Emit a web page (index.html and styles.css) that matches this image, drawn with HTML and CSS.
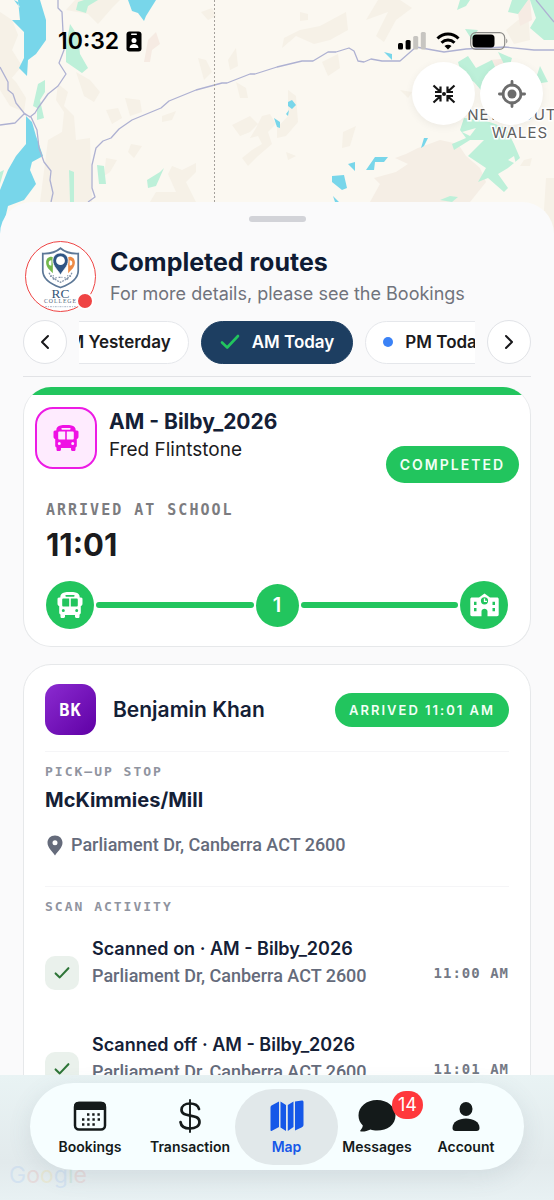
FILE: index.html
```html
<!DOCTYPE html>
<html lang="en">
<head>
<meta charset="utf-8">
<meta name="viewport" content="width=device-width, initial-scale=1">
<title>Completed routes</title>
<link rel="stylesheet" href="styles.css">
</head>
<body>
<svg width="0" height="0" class="sprite" aria-hidden="true">
  <symbol id="bus" viewBox="0 0 26 26">
    <path fill="currentColor" fill-rule="evenodd" d="M7.500 .5C10 -.1 16 -.1 18.500 .5C21 1 22.700 2.500 22.700 5V5.500H24C25 5.500 25.500 6.300 25.500 7.200V11.500C25.500 12.800 24.800 13.800 23.800 14V20.500C23.800 21.600 23.300 22.300 22.500 22.600V24.500C22.500 25.500 21.900 26 21 26H19.500C18.600 26 18 25.400 18 24.500V23H8V24.500C8 25.400 7.400 26 6.500 26H5C4.100 26 3.500 25.500 3.500 24.500V22.600C2.700 22.300 2.200 21.600 2.200 20.500V14C1.200 13.800 .5 12.800 .5 11.500V7.200C.5 6.300 1 5.500 2 5.500H3.300V5C3.300 2.500 5 1 7.500 .5ZM9 2.900C8.200 2.900 8.200 4.700 9 4.700H17C17.800 4.700 17.800 2.900 17 2.900ZM6.500 6.500C5.700 6.500 5.200 7 5.200 7.800V13.200C5.200 14 5.700 14.600 6.500 14.600H12.200V6.500ZM13.800 6.500V14.600H19.500C20.300 14.600 20.800 14 20.800 13.200V7.800C20.800 7 20.300 6.500 19.500 6.500ZM6.300 17.100A1.500 1.500 0 1 0 6.300 20.100A1.500 1.500 0 1 0 6.300 17.100ZM19.700 17.100A1.500 1.500 0 1 0 19.700 20.100A1.500 1.500 0 1 0 19.700 17.100Z"/>
  </symbol>
  <symbol id="check" viewBox="0 0 20 16">
    <path d="M2 8.500L7.200 13.500L18 2" fill="none" stroke="currentColor" stroke-width="2.600" stroke-linecap="round" stroke-linejoin="round"/>
  </symbol>
</svg>

<div class="app">
  <svg class="map" viewBox="0 0 554 240" preserveAspectRatio="xMidYMin slice" aria-hidden="true">
    <rect width="554" height="240" fill="#fbf8f1"/>
    <g fill="#f6f1e7">
      <path d="M0 12L12 20L18 35L12 50L22 66L10 80L0 78ZM0 66L16 82L26 98L24 112L10 106L0 90Z"/>
      <path d="M66 10L88 14L98 24L112 8L120 0H75ZM76 72L90 80L100 92L94 102L84 96ZM58 84L68 92L64 106L74 116L76 140L90 138L92 202H40L48 140L62 132L64 112L56 100Z"/>
      <path d="M125 98L140 100L142 112L130 116ZM106 110L118 108L122 118L112 124ZM131 144L142 146L134 158L128 152ZM162 116L176 111L172 120L162 122Z"/>
      <path d="M106 158L117 160L110 172L104 176ZM172 166L182 170L196 163L196 172L186 182L196 202H150L156 192H176L168 174Z"/>
      <path d="M201 12L212 8L216 16L208 20ZM198 58L206 60L212 72L204 80ZM228 60L236 48L238 66L230 70ZM236 82L246 88L248 98L240 98Z"/>
      <path d="M232 125L250 116L258 124L250 132L240 136ZM262 116L270 114L276 124L268 132L272 144L258 156L248 166L242 158L252 150L262 144L258 136L250 138L256 128Z"/>
      <path d="M300 12L308 14L308 20L300 21ZM320 26L346 12L348 30L330 40L314 44L296 36L282 48L284 38L300 30ZM378 0L400 0L412 8L396 20L384 42L376 36L388 12L366 20Z"/>
      <path d="M322 62L338 54L340 68L328 76ZM288 90L296 96L298 122L286 136L277 138V128L288 116ZM343 132L356 126L350 146L342 148ZM286 152L296 156L288 160ZM400 90L412 92L408 98Z"/>
      <path d="M506 30L528 12L530 40L514 44ZM524 160L532 158L530 166L520 166ZM546 178H554V240H542Z"/>
    </g>
    <path fill="#f5eee5" d="M395 158L406 154L418 148L440 140L458 144L466 156L480 168L486 182L470 202H370L380 184L374 178L396 172L408 164Z"/>
    <g fill="#f6ebe3"><path d="M148 40L156 32L160 44L152 50L150 62L144 62ZM516 0H530L532 20L520 26ZM490 60L510 58L500 72Z"/></g>
    <g fill="#bdf0d9">
      <path d="M78 2L84 0H98L88 6L86 13L76 10ZM70 24L78 36L80 54L88 68L82 73L66 62L66 46ZM38 84L45 80L45 92L40 100L44 118L37 120L37 108L33 106ZM69 170L74 172V202H70ZM97 165L104 166L106 184L99 184ZM147 180L160 172L164 168L156 186L148 188ZM0 172L4 170L0 184Z"/>
      <path d="M460 0H470L466 6L457 10ZM512 0H528L518 14L508 12ZM530 0H554V40L544 40L530 28L536 18ZM465 29L478 30L472 40ZM458 62L468 56L476 68L492 60L500 78L486 96L474 82L462 76ZM498 52L512 58L508 72ZM540 66L548 82L534 84Z"/>
      <path d="M464 118L484 120L506 128L514 144L520 158L508 168L498 174L508 188L504 192L488 178L478 182L486 168L468 156L484 140L470 140L454 150L452 144L466 138L460 130ZM440 200L450 196L458 197L452 202Z"/>
    </g>
    <g fill="#fbf8f1"><path d="M462 132L476 128L470 136ZM508 160L514 156L516 164ZM492 134L498 128L502 134Z"/></g>
    <g fill="#78d6ea">
      <path d="M18 0H40L46 20V40L36 54L28 60L27 76L19 68L24 58V32L12 20L20 20ZM14 0L20 8L18 2ZM128 0H156L146 16L144 21L138 13L132 11Z"/>
      <path d="M26 116L32 122L36 136L43 156L32 162L30 170L36 184L24 200L8 206L0 240V190L8 170L16 156L26 144Z"/>
      <path d="M274 118L280 122V128L277 127ZM288 102L292 100L296 105L292 109L288 106ZM286 114L289 110L288 116ZM384 52L392 54L392 60ZM421 148L424 138L428 138L424 146ZM348 164L355 162L355 171ZM366 170L375 157H388L384 162L375 162L374 170ZM332 176L344 175L347 188L342 190L332 182ZM333 196L339 202H335Z"/>
    </g>
    <g fill="none" stroke="#aeb1d2" stroke-width="1.300" stroke-linejoin="round">
      <path d="M58 0V8L62 12L63 32L64 50L59 63L66 74L58 86L48 94L38 108L35 113L30 117L24 113L16 103L13 94L8 90V82L0 67M0 125L15 123L24 114L31 117L37 130L39 148L44 162L51 171L50 180L53 193L51 202"/>
      <path d="M88 202L95 197L92 188V165L96 148L103 141L111 138L119 129L132 120L161 108L169 101L196 90L222 83L227 83L250 74L255 74L277 67L302 61H313L328 52H336L349 48L354 51L358 61L364 62L371 59L382 61H400L416 47L444 52L466 49L505 47L534 50H554M536 0L554 22"/>
    </g>
    <path d="M214.500 0V202" stroke="#a5a19c" stroke-width="1" stroke-dasharray="2 2" fill="none"/>
    <g class="map-label"><text x="518" y="120">NEW SOUTH</text><text x="520" y="138">WALES</text></g>
  </svg>

  <header class="top">
    <div class="status">
      <div class="clock"><span>10:32</span>
        <svg width="16" height="21" viewBox="0 0 16 21" aria-hidden="true"><rect width="15" height="20" x=".5" y=".5" rx="3"/><g fill="#fff"><rect x="5" y="2.500" width="6" height="1.500" rx=".7"/><circle cx="8" cy="9.500" r="2.500"/><path d="M3.500 17C3.500 11.700 12.500 11.700 12.500 17Z"/></g></svg>
      </div>
      <div class="signals" aria-hidden="true">
        <svg width="28" height="18" viewBox="0 0 28 18"><rect x="0" y="11" width="5" height="6.500" rx="1.500"/><rect x="7.600" y="8" width="5" height="9.500" rx="1.500"/><g fill="#c7c5c1"><rect x="15.200" y="4" width="5" height="13.500" rx="1.500"/><rect x="22.800" y="0" width="5" height="17.500" rx="1.500"/></g></svg>
        <svg width="24" height="18" viewBox="0 0 24 18" fill="none" stroke="#000" stroke-width="3"><path d="M1.500 6.500C7.500 .4 16.500 .4 22.500 6.500M5.500 10.700C9.300 7 14.700 7 18.500 10.700"/><path d="M12 17.500L8.500 14C10.500 12.300 13.500 12.300 15.500 14Z" fill="#000" stroke="none"/></svg>
        <svg width="38" height="18" viewBox="0 0 38 18"><rect x=".7" y=".7" width="34" height="16.600" rx="5" fill="none" stroke="#8c8b88" stroke-width="1.200"/><rect x="2.500" y="2.500" width="22" height="13" rx="3.500"/><path d="M36.300 6.500C37.700 7.500 37.700 10.500 36.300 11.500Z" fill="#8c8b88"/></svg>
      </div>
    </div>
    <div class="map-actions">
      <button type="button" class="round" aria-label="Fit map to routes">
        <svg width="24" height="20" viewBox="0 0 24 20" fill="none" stroke="#151515" stroke-width="2.200"><path d="M1.500 1.500L8 7.500M8.500 2.500V8H3M22.500 1.500L16 7.500M15.500 2.500V8H21M1.500 18.500L8 12.500M8.500 17.500V12H3M22.500 18.500L16 12.500M15.500 17.500V12H21"/><circle cx="12" cy="10" r="2" fill="#151515" stroke="none"/></svg>
      </button>
      <button type="button" class="round" aria-label="My location">
        <svg width="28" height="28" viewBox="0 0 28 28" fill="none" stroke="#6c6c6c" stroke-width="2.800"><circle cx="14" cy="14" r="9"/><circle cx="14" cy="14" r="4.500" fill="#6c6c6c" stroke="none"/><path d="M14 1.400V5M14 23V26.600M1.400 14H5M23 14H26.600" stroke-linecap="round"/></svg>
      </button>
    </div>
  </header>

  <main class="sheet">
    <div class="handle"></div>
    <div class="intro">
      <div class="college">
        <svg viewBox="0 0 72 72" role="img" aria-label="RC College">
          <path d="M17.500 12Q29 12.500 36 6.500Q43 12.500 54.500 12V30C54.500 39 46 44 36 47.500C26 44 17.500 39 17.500 30Z" fill="#fff" stroke="#5d7897" stroke-width="1.800"/>
          <path fill="#74b84c" fill-rule="evenodd" d="M26.500 15.500C23 15.500 21 18 21 21.500C21 26 24 29 28 32.500V16ZM26.500 19A2.800 2.800 0 1 0 26.500 24.600Z"/>
          <path fill="#ee8a45" fill-rule="evenodd" d="M45.500 15.500C49 15.500 51 18 51 21.500C51 26 48 29 44 32.500V16ZM45.500 19A2.800 2.800 0 1 1 45.500 24.600Z"/>
          <path fill="#2f5585" stroke="#fff" stroke-width=".8" d="M36 11.500C31 11.500 28 15 28 19.500C28 25.500 33 28.500 36 34.500C39 28.500 44 25.500 44 19.500C44 15 41 11.500 36 11.500Z"/><circle cx="36" cy="19.500" r="4.600" fill="#fff"/>
          <path d="M24 32C27 38 32 40 36 42C40 40 45 38 48 32M25 36L29 35M28 39L32 37M47 36L43 35M44 39L40 37M34 37H38" fill="none" stroke="#8092a8" stroke-width="1.300" stroke-dasharray="2 1"/>
          <text x="36" y="58" class="crest-rc">RC</text><text x="36" y="64" class="crest-name">COLLEGE</text>
          <path d="M20 67.500H53" stroke="#a3b2c6" stroke-width="1" stroke-dasharray="2 1 1 1"/>
        </svg>
        <span class="live"></span>
      </div>
      <div><h1>Completed routes</h1><p>For more details, please see the Bookings</p></div>
    </div>
    <div class="picker">
      <button type="button" class="step" aria-label="Previous"><svg width="10" height="16" viewBox="0 0 10 16"><path d="M8 2L2 8L8 14"/></svg></button>
      <div class="chips">
        <button type="button" class="chip">PM Yesterday</button>
        <button type="button" class="chip active"><svg class="tick" width="20" height="16"><use href="#check"/></svg>AM Today</button>
        <button type="button" class="chip"><span class="dot"></span>PM Today</button>
      </div>
      <button type="button" class="step" aria-label="Next"><svg width="10" height="16" viewBox="0 0 10 16"><path d="M2 2L8 8L2 14"/></svg></button>
    </div>

    <div class="feed">
      <section class="card route">
        <div class="route-head">
          <span class="bus-tile"><svg width="26" height="26"><use href="#bus"/></svg></span>
          <div class="route-name"><h2>AM - Bilby_2026</h2><p>Fred Flintstone</p></div>
          <span class="badge large">COMPLETED</span>
        </div>
        <div class="route-body">
          <p class="caps large">ARRIVED AT SCHOOL</p>
          <p class="arrival">11:01</p>
          <div class="track">
            <span class="node"><svg width="26" height="26"><use href="#bus"/></svg></span>
            <span class="line"></span>
            <span class="node stop">1</span>
            <span class="line"></span>
            <span class="node"><svg width="29" height="24" viewBox="0 0 29 24"><path fill="currentColor" fill-rule="evenodd" d="M14.500 .5L20 4.500H27C28 4.500 28.700 5.200 28.700 6.200V21.500C28.700 22.500 28 23.200 27 23.200H17.500V18.500C17.500 14.800 11.500 14.800 11.500 18.500V23.200H2C1 23.200 .3 22.500 .3 21.500V6.200C.3 5.200 1 4.500 2 4.500H9ZM14.500 4.200A3.600 3.600 0 1 0 14.500 11.400A3.600 3.600 0 1 0 14.500 4.200ZM4 8.700V12H6.500V8.700ZM4 15V18.300H6.500V15ZM22.500 8.700V12H25V8.700ZM22.500 15V18.300H25V15Z"/><path d="M14.500 5.500V8.300H17" fill="none" stroke="currentColor" stroke-width="1.300"/></svg></span>
          </div>
        </div>
      </section>

      <section class="card rider">
        <div class="rider-head">
          <span class="initials">BK</span>
          <h2>Benjamin Khan</h2>
          <span class="badge">ARRIVED 11:01 AM</span>
        </div>
        <div class="block">
          <p class="caps">PICK–UP STOP</p>
          <h3>McKimmies/Mill</h3>
          <p class="place"><svg width="16" height="21" viewBox="0 0 16 21" aria-hidden="true"><path fill="currentColor" fill-rule="evenodd" d="M8 .5C3.500 .5 .5 3.700 .5 7.800C.5 12.500 5 16 8 20.500C11 16 15.500 12.500 15.500 7.800C15.500 3.700 12.500 .5 8 .5ZM8 5.300A2.500 2.500 0 1 0 8 10.300A2.500 2.500 0 1 0 8 5.300Z"/></svg>Parliament Dr, Canberra ACT 2600</p>
        </div>
        <div class="block">
          <p class="caps">SCAN ACTIVITY</p>
          <ul class="scans">
            <li><span class="done"><svg width="16" height="14"><use href="#check"/></svg></span><div><h4>Scanned on · AM - Bilby_2026</h4><p>Parliament Dr, Canberra ACT 2600</p></div><time>11:00 AM</time></li>
            <li><span class="done"><svg width="16" height="14"><use href="#check"/></svg></span><div><h4>Scanned off · AM - Bilby_2026</h4><p>Parliament Dr, Canberra ACT 2600</p></div><time>11:01 AM</time></li>
          </ul>
        </div>
      </section>
    </div>
  </main>

  <footer class="dock">
    <span class="credit" aria-hidden="true"><i class="b">G</i><i class="r">o</i><i class="y">o</i><i class="b">g</i><i class="g">l</i><i class="r">e</i></span>
    <nav class="tabs">
      <a href="#bookings"><svg width="34" height="34" viewBox="0 0 34 34"><rect x="2" y="4" width="30" height="26.500" rx="4" fill="none" stroke="currentColor" stroke-width="2.500"/><path d="M1 11V7C1 4 3 2.700 5.500 2.700H28.500C31 2.700 33 4 33 7V11Z" fill="currentColor"/><path d="M14 15.500H28M9 20.500H28M9 25.500H23" stroke="currentColor" stroke-width="2.400" stroke-dasharray="2.400 2.800" fill="none"/></svg>Bookings</a>
      <a href="#transaction"><svg width="34" height="34" viewBox="0 0 34 34" fill="none" stroke="currentColor" stroke-width="2.700" stroke-linecap="round"><path d="M17 1V33" stroke-width="1.900"/><path d="M26 10C25 6.500 21.500 4.500 17 4.500C12 4.500 8.500 7 8.500 10.800C8.500 19.500 26.500 13.500 26.500 23C26.500 27 22.500 29.500 17 29.500C11.500 29.500 8 27.200 7.500 23"/></svg>Transaction</a>
      <a href="#map" class="current" aria-current="page"><svg width="34" height="34" viewBox="0 0 34 34" fill="currentColor"><path d="M1.500 6.500Q.5 7 .5 8.500V31Q.5 32.500 2 31.700L9 28V2.500ZM10.500 2.500L16 6V32L10.500 28.500ZM17.800 6L23.500 2.500V28L17.800 32ZM25 2.500L32 1.500Q33.500 1.200 33.500 3V26Q33.500 27.500 32 28.200L25 31.500Z"/></svg>Map</a>
      <a href="#messages"><span class="with-count"><svg width="38" height="34" viewBox="0 0 38 34" fill="currentColor"><path d="M19 1C29.500 1 37.500 7.500 37.500 16.500C37.500 25.500 29.500 31.500 19 31.500C16.500 31.500 14.500 31.200 12.500 30.500C9.500 32 6 32.800 3 32.500C1.800 32.300 2 31.500 2.700 30.900C4 29.500 4.700 28 4.800 26.500C2 23.800 .5 20.500 .5 16.500C.5 7.500 8.500 1 19 1Z"/></svg><span class="count">14</span></span>Messages</a>
      <a href="#account"><svg width="34" height="34" viewBox="0 0 34 34" fill="currentColor"><ellipse cx="17" cy="10" rx="6.500" ry="7"/><path d="M3.500 29C3.500 23 9.500 19.500 17 19.500C24.500 19.500 30.500 23 30.500 29C30.500 31 29.500 32 27.500 32H6.500C4.500 32 3.500 31 3.500 29Z"/></svg>Account</a>
    </nav>
  </footer>
</div>
</body>
</html>
```

FILE: styles.css
```css
* { box-sizing: border-box; }
body, h1, h2, h3, h4, p, ul { margin: 0; padding: 0; }
body { font-family: Inter, "Liberation Sans", sans-serif; color: #1b1b1d; background: #fafafb; }
button { font: inherit; color: inherit; border: 0; padding: 0; cursor: pointer; }
svg { display: block; flex: none; }
.sprite { position: absolute; }

.app { position: relative; height: 100vh; display: flex; flex-direction: column; overflow: hidden; }
.map { position: absolute; inset: 0 0 auto; width: 100%; height: 240px; }
.map-label { font-size: 15px; letter-spacing: 1px; fill: #606060; text-anchor: middle; stroke: #fff; stroke-width: 3px; paint-order: stroke; }

.top { position: relative; height: 202px; flex: none; }
.status { display: flex; justify-content: space-between; align-items: center; padding: 26px 46px 0 58px; }
.clock { display: flex; align-items: center; gap: 7px; color: #000; font-size: 23px; line-height: 30px; font-weight: 600; }
.signals { display: flex; align-items: center; gap: 10px; }
.map-actions { display: flex; justify-content: flex-end; gap: 5px; padding: 6px 11px 0; }
.round { width: 63px; height: 63px; border-radius: 50%; background: #fff; display: grid; place-items: center; box-shadow: 0 2px 8px rgba(0, 0, 0, .06); }

.sheet { position: relative; flex: 1; min-height: 0; display: flex; flex-direction: column; padding: 14px 23px 0; background: #fafafb; border-radius: 32px 32px 0 0; }
.handle { align-self: center; flex: none; width: 57px; height: 6px; border-radius: 3px; background: #d2d3d8; }
.intro { display: flex; align-items: center; gap: 14px; padding: 19px 2px 8px; }
.college { position: relative; flex: none; width: 71px; height: 71px; border: 1px solid #ef4444; border-radius: 50%; background: #fff; }
.live { position: absolute; right: 1px; bottom: 1px; width: 18px; height: 18px; border: 2px solid #fff; border-radius: 50%; background: #ef4444; }
.crest-rc { font: 14px "Liberation Serif", serif; fill: #365778; text-anchor: middle; }
.crest-name { font: 6px "Liberation Serif", serif; letter-spacing: 1px; fill: #50647c; text-anchor: middle; }
h1 { font-size: 25px; line-height: 33px; font-weight: 700; color: #0f1b33; }
.intro p { font-size: 18px; line-height: 29px; color: #70737c; }

.picker { display: flex; align-items: center; gap: 12px; flex: none; padding-bottom: 12px; border-bottom: 1px solid #e2e3e6; }
.step { flex: none; width: 44px; height: 44px; border: 1px solid #e1e3e7; border-radius: 50%; background: #fff; display: grid; place-items: center; }
.step path { fill: none; stroke: #18181b; stroke-width: 2; stroke-linecap: round; stroke-linejoin: round; }
.chips { flex: 1; min-width: 0; display: grid; grid-template-columns: minmax(0, 1fr) auto minmax(0, 1fr); gap: 12px; overflow: hidden; }
.chip { display: flex; align-items: center; gap: 12px; height: 43px; padding: 0 17px; border: 1px solid #e5e7eb; border-radius: 22px; background: #fff; font-size: 17px; font-weight: 600; white-space: nowrap; }
.chip:first-child { justify-self: end; }
.chip:last-child { justify-self: start; }
.chip.active { padding: 0 18px; color: #fff; background: #1d3e61; border-color: #1d3e61; }
.tick { color: #22c55e; }
.dot { width: 10px; height: 10px; border-radius: 50%; background: #3b82f6; }

.feed { flex: 1; min-height: 0; display: flex; flex-direction: column; gap: 17px; padding-top: 10px; overflow-y: auto; scrollbar-width: none; }
.card { flex: none; background: #fff; border: 1px solid #e6e8ea; border-radius: 28px; overflow: hidden; }
.route { border-top: 0; }
.route::before { content: ""; display: block; height: 8px; background: #22c55e; }
.route-head { display: flex; gap: 12px; padding: 12px 11px 0; }
.bus-tile { width: 62px; height: 62px; border: 2px solid #ec1be4; border-radius: 18px; background: #feebfe; color: #ef11e4; display: grid; place-items: center; }
.route-name { flex: 1; }
h2 { font-size: 21px; line-height: 30px; font-weight: 600; color: #142036; }
.route-name h2 { font-weight: 700; }
.route-name p { font-size: 19px; line-height: 26px; }
.badge { flex: none; padding: 0 14px; border-radius: 20px; background: #22c55e; color: #f2fff6; font-size: 13px; line-height: 34px; font-weight: 600; letter-spacing: 2px; }
.badge.large { font-size: 14px; line-height: 37px; margin-top: 39px; }
.route-body { padding: 17px 22px; }
.caps { font: 700 13px/18px "DejaVu Sans Mono", monospace; letter-spacing: 2px; color: #9094a0; }
.caps.large { font-size: 15px; line-height: 20px; color: #7c7c80; }
.arrival { margin-top: 6px; font-size: 31px; line-height: 38px; font-weight: 700; }
.track { display: flex; align-items: center; gap: 2px; margin-top: 17px; }
.node { flex: none; width: 48px; height: 48px; border-radius: 50%; background: #22c55e; color: #fff; display: grid; place-items: center; }
.node.stop { width: 43px; height: 43px; font-size: 20px; font-weight: 600; }
.line { flex: 1; height: 6px; border-radius: 3px; background: #22c55e; }

.rider { padding: 19px 21px; }
.rider-head { display: flex; align-items: center; gap: 17px; padding-bottom: 16px; }
.rider-head h2 { flex: 1; }
.initials { width: 51px; height: 51px; border-radius: 14px; background: linear-gradient(135deg, #8b2bd0, #5f00a5); color: #fff; display: grid; place-items: center; font: 700 17px/20px "DejaVu Sans Mono", monospace; letter-spacing: 1px; }
.block { border-top: 1px solid #f5f5f7; padding: 11px 0 30px; }
h3 { margin-top: 6px; font-size: 20px; line-height: 26px; font-weight: 700; color: #142036; }
.place { display: flex; align-items: center; gap: 8px; margin-top: 21px; padding-left: 2px; font: 500 18px/22px Roboto, sans-serif; color: #656b7b; }
.scans { list-style: none; display: grid; gap: 42px; margin-top: 20px; }
.scans li { display: flex; align-items: flex-end; gap: 13px; }
.scans div { flex: 1; }
.done { width: 34px; height: 34px; border-radius: 10px; background: #eaf1ec; color: #2e7538; display: grid; place-items: center; }
h4 { font-size: 18px; line-height: 26px; font-weight: 600; color: #142036; }
.scans p { font: 500 18px/28px Roboto, sans-serif; color: #656b7b; }
time { font: 700 14px/34px "DejaVu Sans Mono", monospace; letter-spacing: 1px; color: #747985; }

.dock { position: relative; flex: none; padding: 8px 30px 30px; background: linear-gradient(#e9f3f4, #e2eaec 70%, #e8f1f3); }
.credit { position: absolute; left: 9px; bottom: 10px; font-size: 23px; line-height: 30px; opacity: .1; }
.credit i { font-style: normal; }
.credit .b { color: #4285f4; }
.credit .r { color: #ea4335; }
.credit .y { color: #fbbc05; }
.credit .g { color: #34a853; }
.tabs { position: relative; display: grid; grid-template-columns: 110fr 90fr 103fr 78fr 100fr; padding: 6px 8px 5px 5px; border-radius: 44px; background: #f6feff; box-shadow: 0 6px 24px rgba(80, 110, 120, .12); }
.tabs a { display: flex; flex-direction: column; align-items: center; gap: 4px; height: 76px; padding-top: 10px; border-radius: 38px; color: #141a1a; font-size: 14px; line-height: 20px; font-weight: 600; text-decoration: none; }
.tabs .current { color: #1658e8; background: #e1e8ea; }
.with-count { position: relative; }
.count { position: absolute; left: 34px; top: -8px; width: 31px; height: 28px; border-radius: 14px; background: #ff383c; color: #fff; font-size: 18px; line-height: 28px; font-weight: 400; text-align: center; }
```
